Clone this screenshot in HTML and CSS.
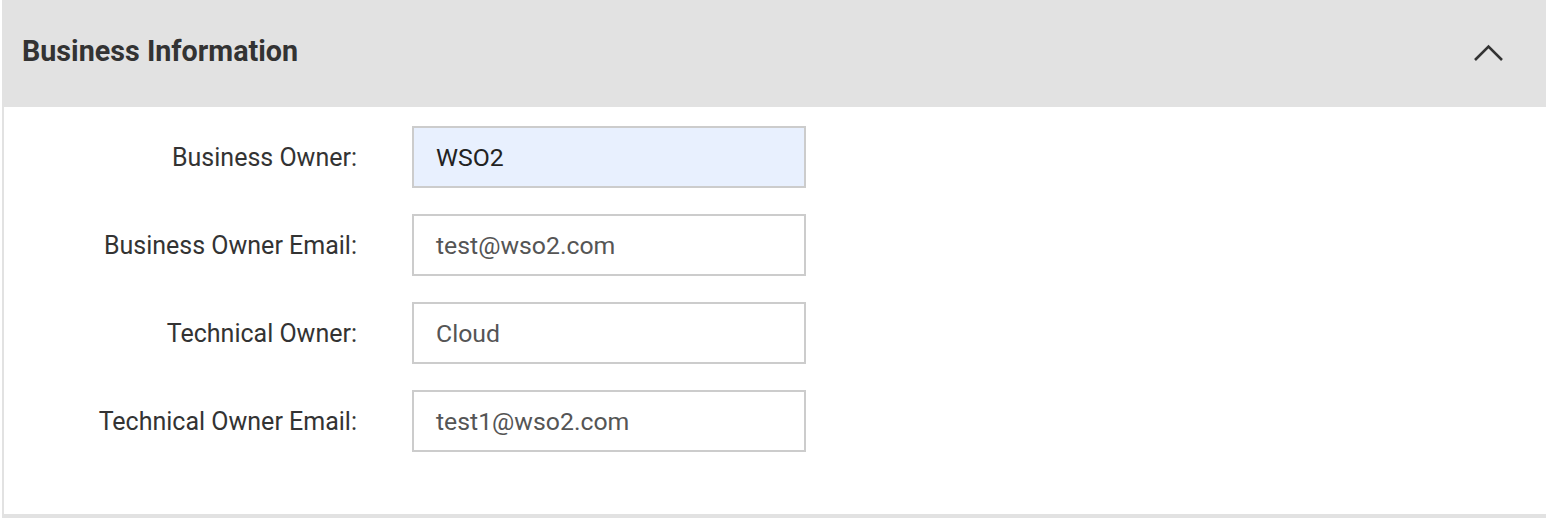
FILE: index.html
```html
<!DOCTYPE html>
<html>
<head>
<meta charset="utf-8">
<link rel="stylesheet" href="styles.css">
</head>
<body>
<section class="card">
  <header class="card-header">
    <h2 class="title">Business Information</h2>
    <svg class="chevron" width="32" height="20" viewBox="0 0 32 20"><path d="M2 17 L15.5 3.5 L29 17" fill="none" stroke="#333" stroke-width="2.6"/></svg>
  </header>
  <div class="form">
    <label class="label">Business Owner:</label>
    <div class="input autofill">WSO2</div>
    <label class="label">Business Owner Email:</label>
    <div class="input">test@wso2.com</div>
    <label class="label">Technical Owner:</label>
    <div class="input">Cloud</div>
    <label class="label">Technical Owner Email:</label>
    <div class="input">test1@wso2.com</div>
  </div>
</section>
</body>
</html>
```
FILE: styles.css
```css
html, body {
  margin: 0;
  padding: 0;
  background: #fff;
  font-family: Roboto, "Liberation Sans", sans-serif;
}
.card {
  margin-left: 2px;
  border: 2px solid #e2e2e2;
  border-top: 0;
  border-bottom-width: 4px;
  border-right: 0;
}
.card-header {
  background: #e2e2e2;
  height: 107px;
  margin-left: -2px;
  display: flex;
  align-items: center;
  justify-content: space-between;
  padding: 0 41px 0 20px;
}
.title {
  margin: 0;
  font-size: 28.7px;
  font-weight: 700;
  color: #333;
  position: relative;
  top: -3px;
}
.chevron {
  position: relative;
  top: -1px;
}
.form {
  display: grid;
  grid-template-columns: 353px 394px;
  column-gap: 55px;
  row-gap: 26px;
  padding: 19px 0 62px 0;
  align-items: center;
}
.label {
  text-align: right;
  font-size: 25px;
  color: #333;
}
.input {
  box-sizing: border-box;
  height: 62px;
  border: 2px solid #ccc;
  padding: 0 22px;
  display: flex;
  align-items: center;
  font-size: 24.8px;
  color: #555;
  background: #fff;
}
.input.autofill {
  background: #e8f0fe;
  color: #222;
}
```
